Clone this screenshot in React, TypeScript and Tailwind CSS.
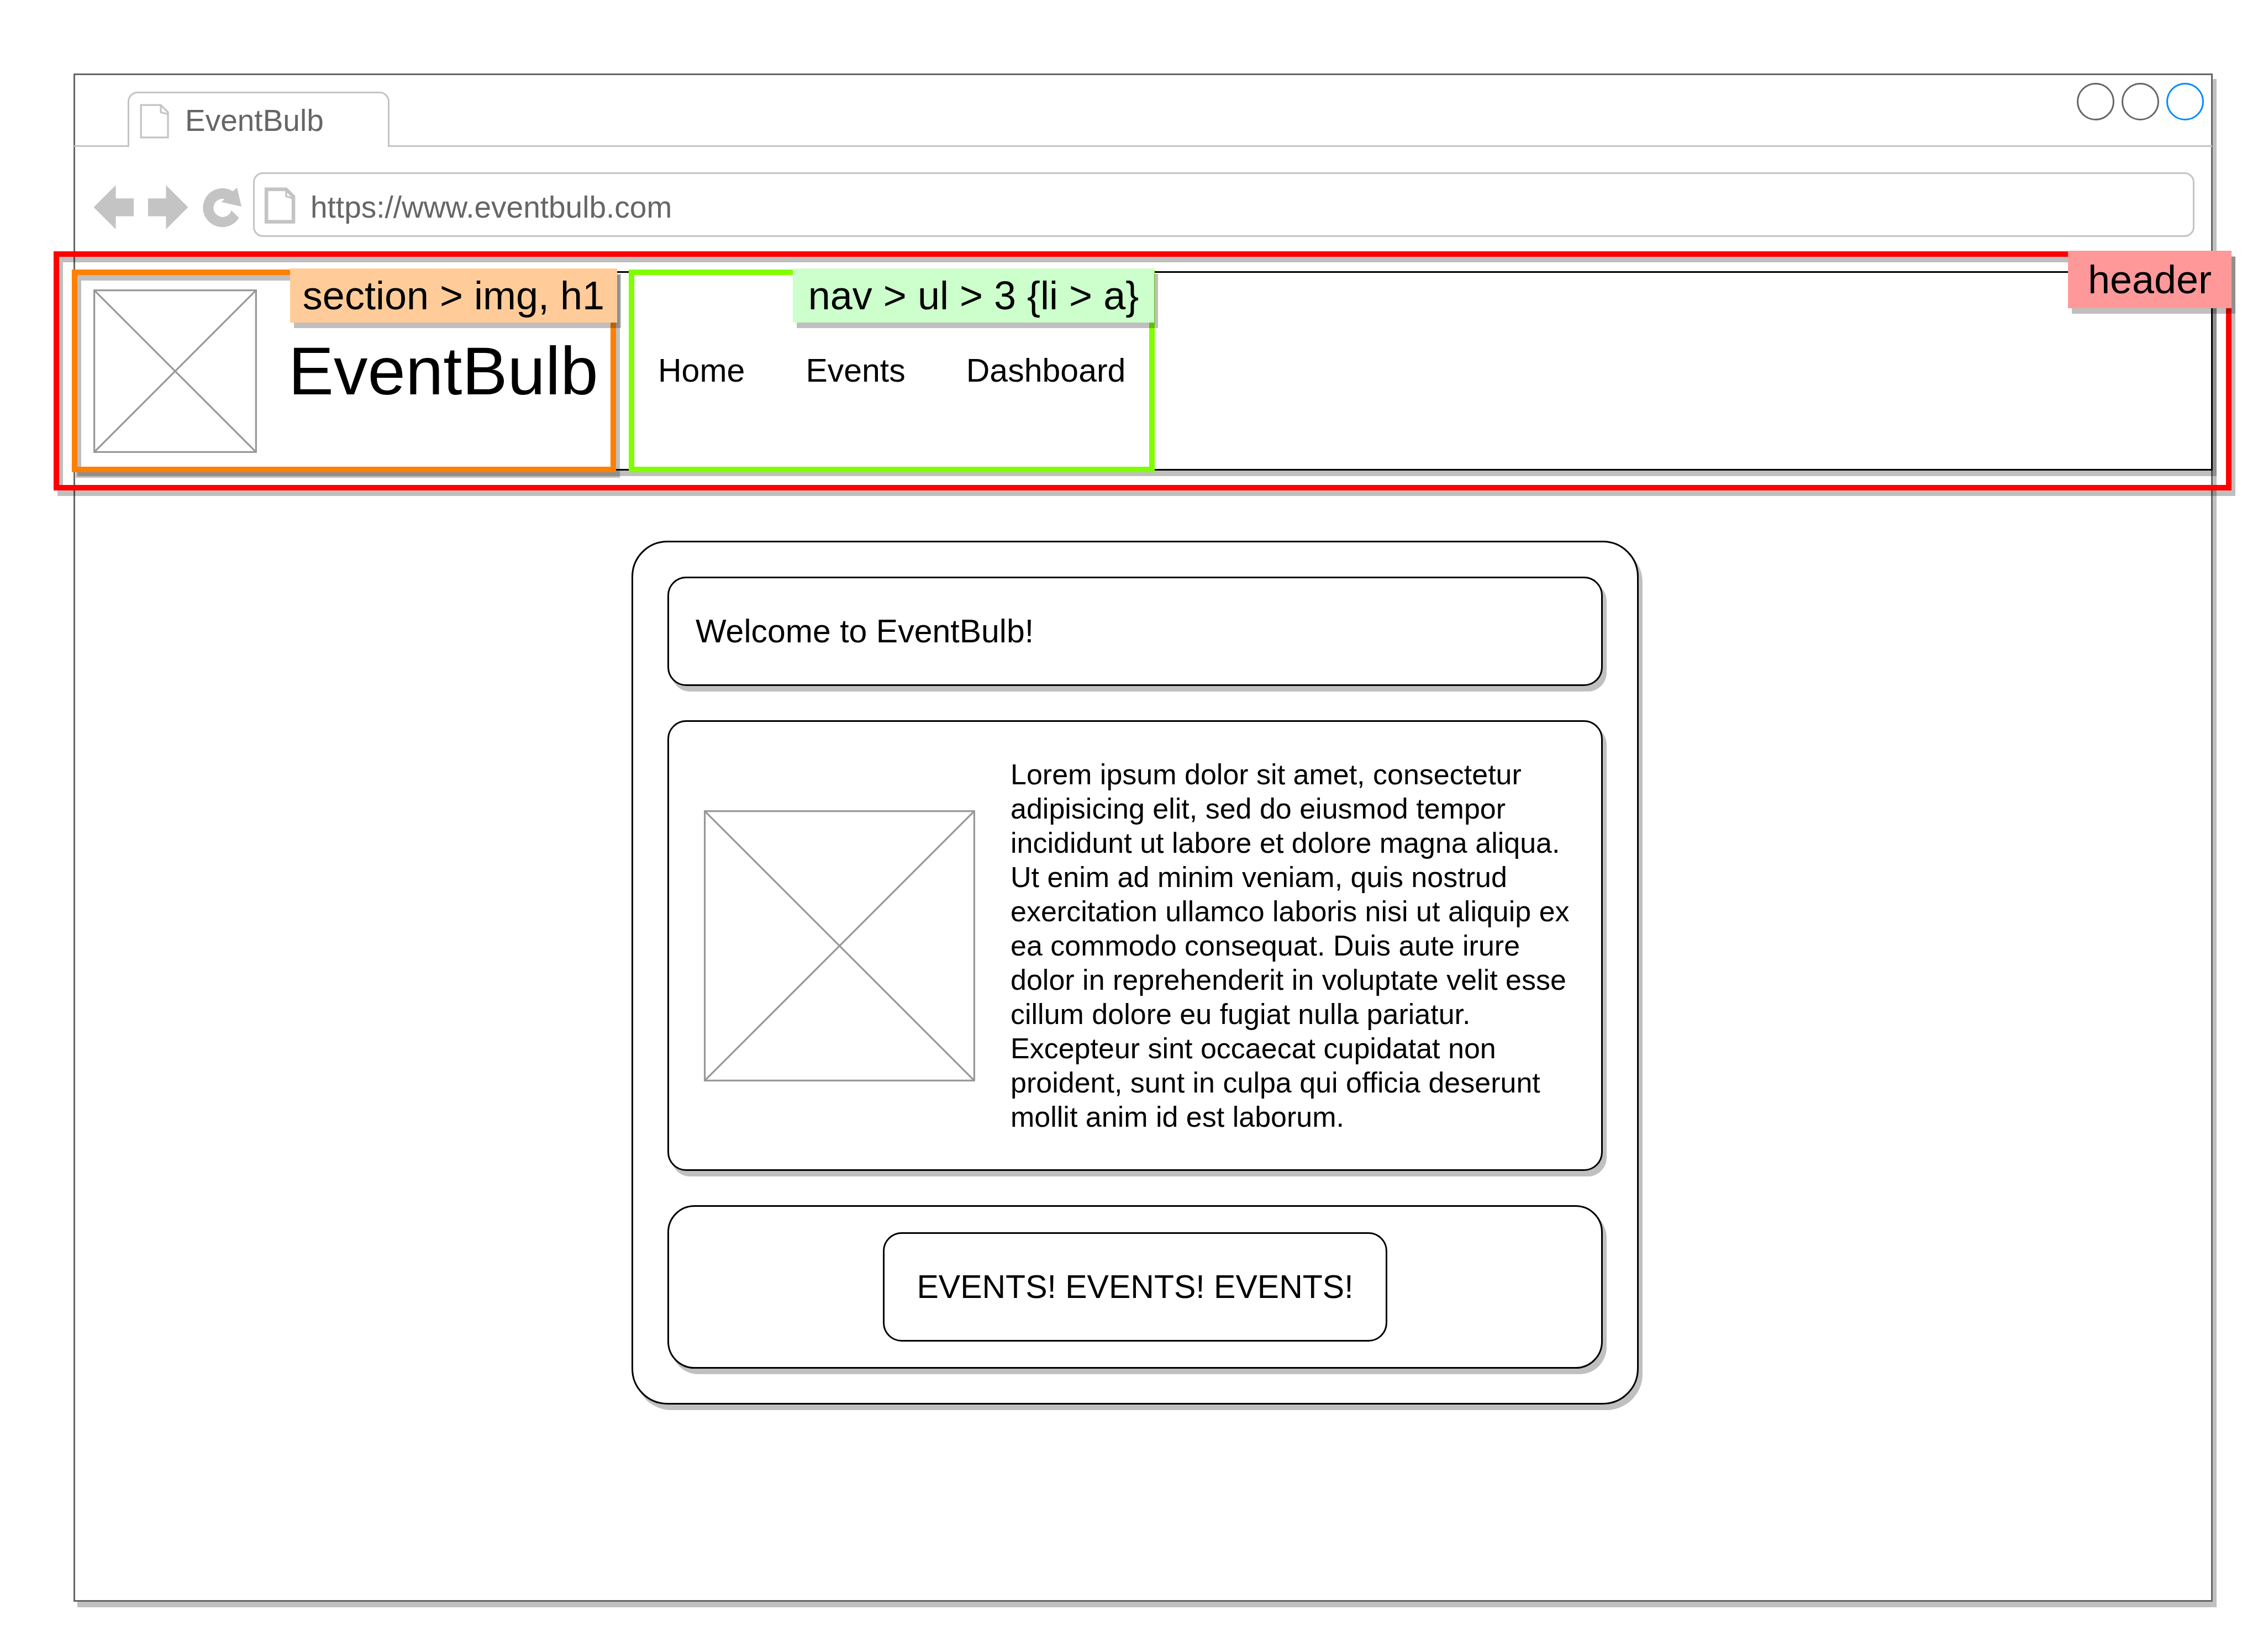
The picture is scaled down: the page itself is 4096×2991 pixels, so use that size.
import React from "react";

const LOREM =
  "Lorem ipsum dolor sit amet, consectetur adipisicing elit, sed do eiusmod tempor incididunt ut labore et dolore magna aliqua. Ut enim ad minim veniam, quis nostrud exercitation ullamco laboris nisi ut aliquip ex ea commodo consequat. Duis aute irure dolor in reprehenderit in voluptate velit esse cillum dolore eu fugiat nulla pariatur. Excepteur sint occaecat cupidatat non proident, sunt in culpa qui officia deserunt mollit anim id est laborum.";

const NAV_LINKS = ["Home", "Events", "Dashboard"];

function Placeholder({ className, unit }: { className: string; unit: number }) {
  const end = unit - 2;
  return (
    <svg
      role="img"
      aria-label="Image placeholder"
      viewBox={`0 0 ${unit} ${unit}`}
      className={`shrink-0 ${className}`}
      fill="none"
      stroke="#999999"
      strokeWidth="4"
    >
      <path d={`M2 2H${end}V${end}H2Z`} />
      <path d={`M2 2L${end} ${end}M2 ${end}L${end} 2`} />
    </svg>
  );
}

function Tag({ className, children }: { className: string; children: React.ReactNode }) {
  return (
    <span
      className={`absolute flex items-center justify-center whitespace-nowrap text-[72px] leading-none shadow-[7px_10px_0_rgba(0,0,0,0.25)] ${className}`}
    >
      {children}
    </span>
  );
}

function TabStrip() {
  return (
    <div className="-mx-[2px] flex h-[130px] items-end">
      <div className="w-[97px] shrink-0 border-b-[3px] border-[#c4c4c4]" />
      <div className="flex h-[100px] w-[474px] shrink-0 items-center rounded-t-[18px] border-x-[3px] border-t-[3px] border-[#c4c4c4]">
        <svg aria-hidden="true" viewBox="288 208 124 119" className="h-[97px] w-[101px] shrink-0" fill="none" stroke="#c4c4c4" strokeWidth="4">
          <path d="M314 234H358L374 250V306H314Z" />
          <path d="M358 234V250L374 254" />
        </svg>
        <span className="text-[55px] leading-[60px] text-[#666666]">EventBulb</span>
      </div>
      <div className="flex h-full flex-1 items-start justify-end gap-[13px] border-b-[3px] border-[#c4c4c4] pt-[14px] pr-[15px]">
        <button type="button" aria-label="Minimize" className="size-[68px] rounded-full border-[3px] border-[#666666]" />
        <button type="button" aria-label="Maximize" className="size-[68px] rounded-full border-[3px] border-[#666666]" />
        <button type="button" aria-label="Close" className="size-[68px] rounded-full border-[3px] border-[#008cff]" />
      </div>
    </div>
  );
}

function Toolbar() {
  return (
    <div className="flex pt-[46px] pr-[30px] pb-[62px] pl-[33px]">
      <button type="button" aria-label="Back" className="shrink-0">
        <svg viewBox="208 384 122 144" className="h-[117px] w-[99px]" fill="#c4c4c4">
          <path d="M208.7 462L258 412.7V442H298V482H258V511.3Z" />
        </svg>
      </button>
      <button type="button" aria-label="Forward" className="shrink-0">
        <svg viewBox="330 384 122 144" className="h-[117px] w-[99px]" fill="#c4c4c4">
          <path d="M419.3 462L370 412.7V442H330V482H370V511.3Z" />
        </svg>
      </button>
      <button type="button" aria-label="Reload" className="shrink-0">
        <svg viewBox="452 384 112 144" className="h-[117px] w-[91px]" fill="#c4c4c4">
          <path d="M519 426.3L528.3 418L538.3 460.3L493.7 450.3L500.3 443.3A20.3 20.3 0 1 0 515.7 469L532.7 485.3A43.3 43.3 0 1 1 519 426.3Z" />
        </svg>
      </button>
      <div className="flex h-[117px] flex-1 rounded-[18px] border-[3px] border-[#c4c4c4]">
        <svg aria-hidden="true" viewBox="568 388 124 136" className="h-[111px] w-[101px] shrink-0" fill="none" stroke="#c4c4c4">
          <path d="M594 422H638L654 438V494H594Z" strokeWidth="8" />
          <path d="M638 422V438L654 442" strokeWidth="4" />
        </svg>
        <input
          type="text"
          aria-label="Address"
          defaultValue="https://www.eventbulb.com"
          className="min-w-0 flex-1 bg-transparent pt-2 text-[55px] leading-[60px] text-[#666666] outline-none"
        />
      </div>
    </div>
  );
}

function Header() {
  return (
    <header className="relative -mx-[3px] flex h-[361px] border-[3px] border-black bg-white shadow-[7px_10px_0_rgba(0,0,0,0.25)]">
      <section className="relative flex w-[973px] shrink-0 items-center gap-[57px] pl-[33px]">
        <div className="absolute -inset-[6px] border-[10px] border-[#ff8000] shadow-[7px_10px_0_rgba(0,0,0,0.25),inset_7px_10px_0_rgba(0,0,0,0.25)]" />
        <Placeholder unit={364} className="size-[296px]" />
        <h1 className="text-[123px] leading-none">EventBulb</h1>
        <Tag className="-top-[8px] -right-[8px] h-[98px] w-[592px] bg-[#ffcc99]">section &gt; img, h1</Tag>
      </section>
      <nav className="relative ml-[35px] flex w-[940px] shrink-0 items-center pl-[47px]">
        <div className="absolute -inset-[6px] border-[10px] border-[#80ff00]" />
        <ul className="relative flex gap-[110px] text-[59px] leading-none">
          {NAV_LINKS.map((label) => (
            <li key={label}>
              <a href={`#${label.toLowerCase()}`}>{label}</a>
            </li>
          ))}
        </ul>
        <Tag className="-top-[8px] -right-[5px] h-[98px] w-[654px] bg-[#ccffcc]">nav &gt; ul &gt; 3 {"{li > a}"}</Tag>
      </nav>
      <div className="pointer-events-none absolute -top-[39px] -right-[37px] -bottom-[39px] -left-[39px] border-[10px] border-[#ff0000] shadow-[7px_10px_0_rgba(0,0,0,0.25),inset_7px_10px_0_rgba(0,0,0,0.25)]" />
      <Tag className="-top-[40px] -right-[37px] h-[104px] w-[296px] bg-[#ff9999]">header</Tag>
    </header>
  );
}

function MainCard() {
  return (
    <main className="mt-[127px] ml-[1007px] flex w-full max-w-[1823px] flex-col gap-[62px] rounded-[65px] border-[3px] border-black bg-white p-[62px] shadow-[7px_10px_0_#c0c0c0]">
      <div className="rounded-[34px] border-[3px] border-black bg-white px-[48px] py-[66px] shadow-[7px_10px_0_#c0c0c0]">
        <h2 className="text-[59px] leading-[60px]">Welcome to EventBulb!</h2>
      </div>
      <div className="flex items-center gap-16 rounded-[34px] border-[3px] border-black bg-white py-16 pr-[44px] pl-[63px] shadow-[7px_10px_0_#c0c0c0]">
        <Placeholder unit={604} className="size-[491px]" />
        <p className="flex-1 text-[52px] leading-[62px]">{LOREM}</p>
      </div>
      <div className="flex justify-center rounded-[49px] border-[3px] border-black bg-white py-[46px] shadow-[7px_10px_0_#c0c0c0]">
        <button type="button" className="rounded-[34px] border-[3px] border-black px-[58px] py-[66px] text-[59px] leading-[60px]">
          EVENTS! EVENTS! EVENTS!
        </button>
      </div>
    </main>
  );
}

export default function App() {
  return (
    <div className="flex min-h-screen flex-col bg-white pt-[133px] pr-[91px] pb-[91px] pl-[133px] font-['Liberation_Sans',Arial,sans-serif] text-black">
      <div className="flex-1 border-[3px] border-[#666666] bg-white shadow-[7px_10px_0_#c0c0c0]">
        <TabStrip />
        <Toolbar />
        <Header />
        <MainCard />
      </div>
    </div>
  );
}
